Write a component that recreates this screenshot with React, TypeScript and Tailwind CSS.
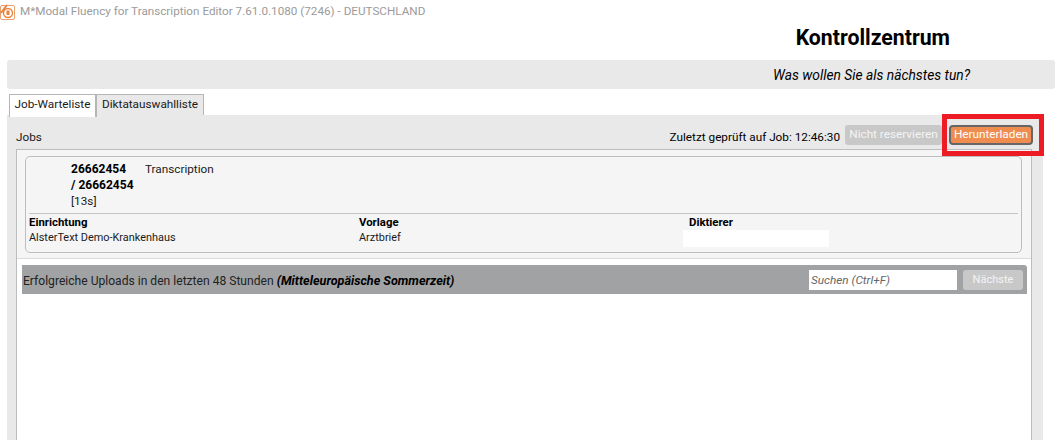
import React from "react";

const Logo = () => (
  <svg width="15" height="17" viewBox="0 0 15 17" fill="none" className="shrink-0">
    <rect x="0.5" y="2.5" width="14" height="14" rx="1.5" fill="#fff" stroke="#e8a070" />
    <path d="M1 10 L7 2" stroke="#e8833a" strokeWidth="2" />
    <circle cx="8" cy="10" r="4.5" stroke="#e8833a" strokeWidth="1.4" />
    <rect x="6.5" y="7.5" width="3" height="4.5" fill="#e8833a" />
  </svg>
);

const App = () => {
  return (
    <div className="w-[1055px] h-[440px] overflow-hidden bg-white relative font-['Roboto',sans-serif] text-[11.75px] text-[#1a1a1a]">
      {/* title bar */}
      <div className="h-[24px] flex items-center gap-[5px] pb-[1px]">
        <Logo />
        <span className="text-[11.7px] text-[#9b9b9b]">M*Modal Fluency for Transcription Editor 7.61.0.1080 (7246) - DEUTSCHLAND</span>
      </div>

      <div className="h-[36px] flex justify-end items-center pr-[105px] pb-[9px]">
        <h1 className="text-[21.25px] font-bold text-black">Kontrollzentrum</h1>
      </div>

      <div className="ml-[7px] h-[29px] bg-[#e9e9e9] rounded-[3px] flex items-center justify-end pr-[85px] pt-[1px]">
        <span className="italic text-[13.8px] text-black">Was wollen Sie als nächstes tun?</span>
      </div>

      {/* tabs */}
      <div className="ml-[9px] mt-[5px] h-[21px] flex">
        <div className="w-[88px] h-[23px] pb-[3px] relative z-10 bg-white border-l border-r-2 border-t border-[#b5b5b5] flex items-center justify-center">Job-Warteliste</div>
        <div className="w-[107px] h-[21px] pb-[1px] bg-[#e9e9e9] border-r border-t border-[#b5b5b5] flex items-center justify-center">Diktatauswahlliste</div>
      </div>

      {/* jobs panel */}
      <div className="ml-[7px] w-[1036px] h-[325px] bg-[#e9e9e9] pl-[9px] pr-[11px]">
        <div className="h-[34px] flex items-end">
          <span className="pb-[2px]">Jobs</span>
          <div className="ml-auto flex items-end gap-[5px] mr-[-1px]">
            <span className="text-black pb-[2px]">Zuletzt geprüft auf Job: 12:46:30</span>
            <div className="w-[97px] h-[20px] mb-[4px] bg-[#c8c8c8] rounded-[3px] text-[#f4f4f4] flex items-center justify-center">Nicht reservieren</div>
            <div className="w-[84px] h-[20px] mb-[4px] ml-[2px] bg-[#ef8d50] border-2 border-[#666] rounded-[4px] text-white flex items-center justify-center">Herunterladen</div>
          </div>
        </div>

        <div className="h-[291px] bg-white border-l border-t border-r border-[#bdbdbd]">
          <div className="h-[109px] bg-[#f5f5f5] border-b border-[#dcdcdc] pl-[8px] pr-[9px] pt-[6px]">
            <div className="h-[97px] border border-[#bdbdbd] rounded-[5px] px-[3px]">
              <div className="h-[56px] flex pl-[42px] pt-[4px] leading-[16px]">
                <div className="w-[74px]">
                  <div className="font-bold text-[12px] text-black whitespace-nowrap">26662454</div>
                  <div className="font-bold text-[12px] text-black whitespace-nowrap">/ 26662454</div>
                  <div>[13s]</div>
                </div>
                <div>Transcription</div>
              </div>
              <div className="border-t border-[#c4c4c4] grid grid-cols-[330px_330px_1fr] text-[10.9px] leading-[15px] pt-[1px]">
                <div>
                  <div className="font-bold text-[11.4px] text-black">Einrichtung</div>
                  <div>AlsterText Demo-Krankenhaus</div>
                </div>
                <div>
                  <div className="font-bold text-[11.4px] text-black">Vorlage</div>
                  <div>Arztbrief</div>
                </div>
                <div>
                  <div className="font-bold text-[11.4px] text-black">Diktierer</div>
                  <div className="w-[146px] h-[17px] -ml-[6px] bg-white" />
                </div>
              </div>
            </div>
          </div>

          <div className="mt-[6px] ml-[5px] mr-[4px] h-[29px] bg-[#a1a2a4] rounded-tr-[3px] flex items-start pt-[5px] pl-[1px]">
            <span className="text-[12.1px] text-[#222] pt-[2px]">
              Erfolgreiche Uploads in den letzten 48 Stunden <b className="italic text-[12.6px] text-black">(Mitteleuropäische Sommerzeit)</b>
            </span>
            <div className="ml-auto w-[148px] h-[20px] bg-white flex items-center pl-[2px] pt-[2px] italic text-[#666]">Suchen (Ctrl+F)</div>
            <div className="ml-[6px] mr-[4px] w-[60px] h-[20px] bg-[#c8c8c8] rounded-[3px] text-[11px] text-[#f4f4f4] pt-[1px] flex items-center justify-center">Nächste</div>
          </div>
        </div>
      </div>

      {/* red highlight around the download button */}
      <div className="absolute left-[942px] top-[114px] w-[102px] h-[42px] border-[5px] border-[#ed1c24]" />
    </div>
  );
};

export default App;
